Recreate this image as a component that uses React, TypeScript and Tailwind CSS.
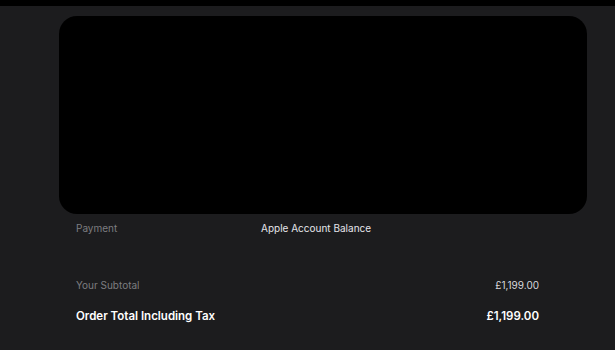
export default function App() {
  return (
    <div className="w-[615px] h-[350px] bg-[#1c1c1e] font-['Inter',sans-serif] overflow-hidden">
      <div className="h-[6px] bg-black" />
      <div className="pl-[59px] pr-[28px] pt-[10px]">
        <div className="h-[198px] rounded-[18px] bg-black" />
      </div>
      <div className="pl-[76px] pr-[76px]">
        <div className="flex items-center h-[28px] text-[10px]">
          <span className="w-[185px] text-[#7c7c80]">Payment</span>
          <span className="text-[#e5e5ea]">Apple Account Balance</span>
        </div>
        <div className="flex items-center justify-between h-[28px] mt-[29px] text-[10px]">
          <span className="text-[#7c7c80]">Your Subtotal</span>
          <span className="text-[#d8d8dc]">£1,199.00</span>
        </div>
        <div className="flex items-center justify-between h-[26px] mt-[5px] text-[11.5px] font-semibold text-white">
          <span>Order Total Including Tax</span>
          <span>£1,199.00</span>
        </div>
      </div>
    </div>
  );
}
